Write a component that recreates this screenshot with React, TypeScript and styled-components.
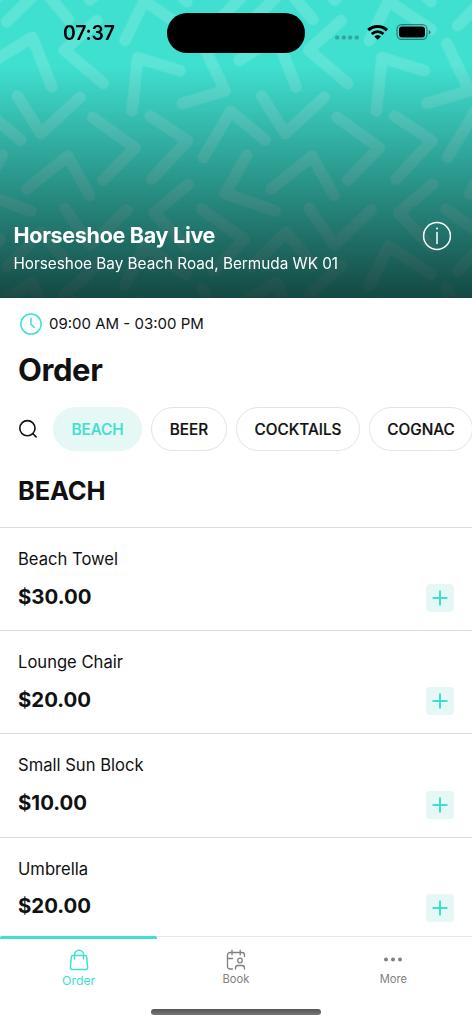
import React from "react";
import styled, { createGlobalStyle } from "styled-components";

const teal = "#40e0d0";
const mint = "#e5f8f6";
const ink = "#111";

const GlobalStyle = createGlobalStyle`
  * { box-sizing: border-box; }
  body { margin: 0; background: #fff; font-family: Inter, "Liberation Sans", sans-serif; color: ${ink}; }
  button { font: inherit; color: inherit; padding: 0; border: 0; background: none; }
  h1, h2, p { margin: 0; }
`;

const Screen = styled.div`
  width: 472px;
  height: 1024px;
  overflow: hidden;
  display: flex;
  flex-direction: column;
  background: #fff;
`;

const Hero = styled.header`
  position: relative;
  isolation: isolate;
  flex: none;
  height: 297.5px;
  display: flex;
  flex-direction: column;
  justify-content: space-between;
  background: ${teal};
`;

const Backdrop = styled.svg`
  position: absolute;
  inset: 0;
  z-index: -2;
  width: 100%;
  height: 100%;
`;

const Shade = styled.div`
  position: absolute;
  inset: 0;
  z-index: -1;
  background: linear-gradient(to bottom, rgba(0, 0, 0, 0) 66px, rgba(0, 0, 0, 0.68) 100%);
`;

const StatusBar = styled.div`
  display: grid;
  grid-template-columns: 167px 138px 1fr;
  align-items: center;
  height: 40.5px;
  margin-top: 12.5px;
  color: #000;
`;

const Time = styled.span`
  padding-left: 63px;
  font-size: 19.4px;
  font-weight: 600;
  letter-spacing: -0.2px;
  line-height: 24px;
`;

const Island = styled.div`
  height: 40.5px;
  border-radius: 21px;
  background: #000;
`;

const StatusIcons = styled.div`
  display: flex;
  align-items: center;
  padding: 0 0 2px 29px;
`;

const Venue = styled.div`
  display: flex;
  justify-content: space-between;
  align-items: flex-start;
  padding: 0 20.5px 23.5px 13.5px;
  color: #fff;
`;

const VenueName = styled.h1`
  font-size: 21.5px;
  font-weight: 700;
  letter-spacing: -0.3px;
  line-height: 28px;
`;

const Address = styled.p`
  font-size: 15.3px;
  line-height: 20px;
  margin-top: 5px;
`;

const Hours = styled.div`
  display: flex;
  align-items: center;
  gap: 7px;
  height: 24px;
  margin: 14.5px 0 0 20px;
  font-size: 15px;
`;

const HoursText = styled.span`
  line-height: 20px;
  padding-bottom: 1px;
`;

const PageTitle = styled.h1`
  margin: 13.5px 0 0 18px;
  font-size: 31px;
  font-weight: 700;
  letter-spacing: -0.4px;
  line-height: 40px;
`;

const Filters = styled.div`
  display: flex;
  align-items: center;
  gap: 9px;
  flex: none;
  height: 44px;
  margin-top: 17.5px;
  padding-left: 18px;
`;

const SearchButton = styled.button`
  display: flex;
  flex: none;
  width: 26px;
`;

const Chip = styled.button<{ $width: number; $active?: boolean }>`
  flex: none;
  width: ${(p) => p.$width}px;
  height: 44px;
  border-radius: 22px;
  border: 1px solid ${(p) => (p.$active ? mint : "#e4e4e4")};
  background: ${(p) => (p.$active ? mint : "#fff")};
  color: ${(p) => (p.$active ? teal : ink)};
  font-size: 15.3px;
  font-weight: 500;
  -webkit-text-stroke: 0.2px currentColor;
`;

const SectionTitle = styled.h2`
  flex: none;
  height: 76px;
  padding: 22.5px 18px 0;
  font-size: 25.5px;
  font-weight: 700;
  letter-spacing: -0.2px;
  line-height: 34px;
`;

const List = styled.main`
  flex: 1;
  min-height: 0;
  overflow: hidden;
`;

const Row = styled.article`
  display: flex;
  justify-content: space-between;
  align-items: flex-end;
  height: 103.2px;
  padding: 0 18px 18px;
  border-top: 1px solid #dedede;
`;

const ItemName = styled.p`
  font-size: 16.6px;
  line-height: 24px;
`;

const Price = styled.p`
  margin-top: 11.5px;
  font-size: 20.4px;
  font-weight: 700;
  line-height: 28px;
  margin-bottom: 1.6px;
`;

const AddButton = styled.button`
  display: grid;
  place-items: center;
  width: 28px;
  height: 28px;
  border-radius: 4px;
  background: ${mint};
`;

const TabBar = styled.nav`
  flex: none;
  height: 88.5px;
  border-top: 1px solid #e8e8e8;
  background: #fff;
`;

const Tabs = styled.div`
  display: grid;
  grid-template-columns: repeat(3, 1fr);
  height: 72px;
`;

const Tab = styled.button<{ $active?: boolean }>`
  display: flex;
  flex-direction: column;
  align-items: center;
  padding-top: ${(p) => (p.$active ? 10 : 10.4)}px;
  border-top: 3px solid ${(p) => (p.$active ? teal : "transparent")};
  border-radius: 2px;
  margin-top: -1px;
  color: ${(p) => (p.$active ? teal : "#808080")};
  font-size: ${(p) => (p.$active ? 12.3 : 11.2)}px;
  line-height: 16px;

  svg { margin-bottom: ${(p) => (p.$active ? 2.5 : 0)}px; }
`;

const HomeIndicator = styled.div`
  width: 170px;
  height: 6px;
  margin: 0.5px 0 0 151px;
  border-radius: 3px;
  background: linear-gradient(#555, #777);
`;

const tile = 733;

const chevrons = [
  "M375 121L432 3L560 88",
  "M20 65L125 -38L205 58",
  "M290 62L193 150L310 250",
  "M195 625L270 735L380 630",
  "M565 553L462 638L560 740",
  "M605 628L733 718L640 812",
  "M-15 180L97 112L155 260",
  "M396 332L413 173L540 212",
  "M607 130L675 272L547 310",
  "M52 288L123 400L240 292",
  "M278 352L405 443L310 540",
  "M450 348L562 422L455 537",
  "M610 472L692 334L795 420",
  "M80 567L203 468L268 585",
  "M740 465L676 580L825 632",
].join("");

const HeroPattern = () => (
  <Backdrop viewBox="0 0 1416 892" preserveAspectRatio="none">
    <g opacity="0.15" fill="none" stroke="#fff" strokeWidth="35" strokeLinecap="round" strokeLinejoin="round">
      {[-1, 0, 1].map((row) =>
        [-1, 0, 1].map((col) => (
          <path key={`${row}${col}`} d={chevrons} transform={`translate(${col * tile} ${row * 735})`} />
        )),
      )}
    </g>
  </Backdrop>
);

const SystemIcons = () => (
  <svg width="100" height="24" viewBox="334 20 100 24">
    {[337.2, 343.8, 350.2, 356.8].map((x) => (
      <rect key={x} x={x - 2.1} y="35.4" width="4.2" height="4.2" rx="1.6" opacity="0.25" />
    ))}
    <g fill="none" stroke="#000">
      <path d="M368.2 30.2a13.6 13.6 0 0 1 18.8 0" strokeWidth="3" />
      <path d="M371.8 34a8.4 8.4 0 0 1 11.6 0" strokeWidth="2.8" />
    </g>
    <path d="M374.3 36.6a4.8 4.8 0 0 1 6.6 0L377.6 39.8Z" />
    <rect x="397" y="24.6" width="30" height="14.8" rx="4.6" fill="none" stroke="#000" strokeOpacity="0.45" strokeWidth="1.2" />
    <rect x="399" y="26.6" width="26" height="10.8" rx="3" />
    <path d="M428.8 30v4.4q1.7-.6 1.7-2.2t-1.7-2.2Z" opacity="0.5" />
  </svg>
);

const InfoIcon = () => (
  <svg width="30" height="30" viewBox="0 0 30 30" fill="none" stroke="#fff">
    <circle cx="15" cy="15" r="13.4" strokeWidth="1.5" />
    <path d="M15 11.6v11" strokeWidth="1.5" strokeLinecap="round" />
    <circle cx="15" cy="7.6" r="1" fill="#fff" stroke="none" />
  </svg>
);

const ClockIcon = () => (
  <svg width="22" height="22" viewBox="0 0 22 22" fill="none" stroke={teal} strokeWidth="1.5" strokeLinecap="round" strokeLinejoin="round">
    <circle cx="11" cy="11" r="10.1" />
    <path d="M11 5.3v5.9l3.4 3.3" />
  </svg>
);

const SearchIcon = () => (
  <svg width="20" height="20" viewBox="0 0 20 20" fill="none" stroke={ink} strokeWidth="1.6" strokeLinecap="round">
    <circle cx="9.4" cy="9.2" r="7.6" />
    <path d="M14.9 14.7l3.2 3.2" />
  </svg>
);

const PlusIcon = () => (
  <svg width="16" height="16" viewBox="0 0 16 16" stroke={teal} strokeWidth="2">
    <path d="M8 0.500v15M0.500 8h15" />
  </svg>
);

const BagIcon = () => (
  <svg width="20" height="22" viewBox="0 0 20 22" fill="none" stroke="currentColor" strokeWidth="1.5" strokeLinecap="round" strokeLinejoin="round">
    <path d="M4 6.500h12a1.700 1.700 0 0 1 1.700 1.500l.9 10.500a1.900 1.900 0 0 1-1.900 2.100H3.300a1.900 1.900 0 0 1-1.900-2.100L2.300 8A1.700 1.700 0 0 1 4 6.500Z" />
    <path d="M5.500 10V5.700a4.500 4.500 0 0 1 9 0V10" />
  </svg>
);

const BookingIcon = () => (
  <svg width="20" height="22" viewBox="0 0 20 22" fill="none" stroke="currentColor" strokeWidth="1.3" strokeLinecap="round" strokeLinejoin="round">
    <path d="M6.500 20H4a2.500 2.500 0 0 1-2.500-2.500V6A2.500 2.500 0 0 1 4 3.500h12A2.500 2.500 0 0 1 18.500 6v1.500" />
    <path d="M6 1.200v4.600M14.200 1.200v4.600M1.500 9.500h5" />
    <circle cx="14" cy="11.500" r="2.300" />
    <path d="M9.500 20v-1a2.500 2.500 0 0 1 2.500-2.500h4a2.500 2.500 0 0 1 2.500 2.500v1" />
  </svg>
);

const MoreIcon = () => (
  <svg width="20" height="22" viewBox="0 0 20 22" fill="currentColor">
    <circle cx="3" cy="10.500" r="2" />
    <circle cx="10" cy="10.500" r="2" />
    <circle cx="17" cy="10.500" r="2" />
  </svg>
);

const categories = [
  { label: "BEACH", width: 89, active: true },
  { label: "BEER", width: 76 },
  { label: "COCKTAILS", width: 124 },
  { label: "COGNAC", width: 104 },
];

const items = [
  { name: "Beach Towel", price: "$30.00" },
  { name: "Lounge Chair", price: "$20.00" },
  { name: "Small Sun Block", price: "$10.00" },
  { name: "Umbrella", price: "$20.00" },
];

export default function App() {
  return (
    <Screen>
      <GlobalStyle />
      <Hero>
        <HeroPattern />
        <Shade />
        <StatusBar>
          <Time>07:37</Time>
          <Island />
          <StatusIcons>
            <SystemIcons />
          </StatusIcons>
        </StatusBar>
        <Venue>
          <div>
            <VenueName>Horseshoe Bay Live</VenueName>
            <Address>Horseshoe Bay Beach Road, Bermuda WK 01</Address>
          </div>
          <InfoIcon />
        </Venue>
      </Hero>
      <Hours>
        <ClockIcon />
        <HoursText>09:00 AM - 03:00 PM</HoursText>
      </Hours>
      <PageTitle>Order</PageTitle>
      <Filters>
        <SearchButton aria-label="Search">
          <SearchIcon />
        </SearchButton>
        {categories.map((c) => (
          <Chip key={c.label} $width={c.width} $active={c.active}>
            {c.label}
          </Chip>
        ))}
      </Filters>
      <SectionTitle>BEACH</SectionTitle>
      <List>
        {items.map((item) => (
          <Row key={item.name}>
            <div>
              <ItemName>{item.name}</ItemName>
              <Price>{item.price}</Price>
            </div>
            <AddButton aria-label={`Add ${item.name}`}>
              <PlusIcon />
            </AddButton>
          </Row>
        ))}
      </List>
      <TabBar>
        <Tabs>
          <Tab $active>
            <BagIcon />
            Order
          </Tab>
          <Tab>
            <BookingIcon />
            Book
          </Tab>
          <Tab>
            <MoreIcon />
            More
          </Tab>
        </Tabs>
        <HomeIndicator />
      </TabBar>
    </Screen>
  );
}
